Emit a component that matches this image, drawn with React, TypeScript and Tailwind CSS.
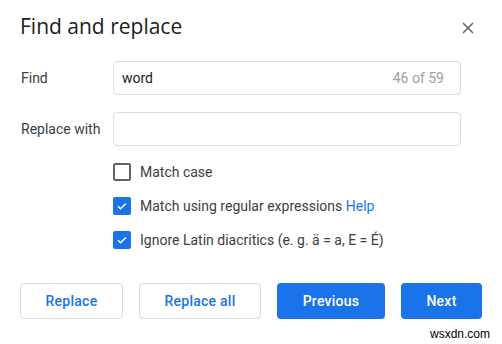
import React from 'react';

function CheckRow({ checked, children }: { checked: boolean; children: React.ReactNode }) {
  return (
    <div className="flex items-center h-[18px]">
      {checked ? (
        <span className="w-[18px] h-[18px] rounded-[2px] bg-[#1a73e8] flex items-center justify-center">
          <svg width="12" height="12" viewBox="0 0 24 24" fill="none">
            <path d="M4 12.5l5 5L20 7" stroke="white" strokeWidth="3" />
          </svg>
        </span>
      ) : (
        <span className="w-[18px] h-[18px] rounded-[2px] border-2 border-[#5f6368]" />
      )}
      <span className="ml-[9px] text-[14px] text-[#3c4043]">{children}</span>
    </div>
  );
}

export default function App() {
  const btn =
    "h-[36px] rounded-[4px] text-[14px] font-medium flex items-center justify-center tracking-[0.25px]";
  return (
    <div className="w-[502px] h-[344px] bg-white font-['Roboto',sans-serif] flex flex-col">
      <div className="flex items-start justify-between pl-[20px] pr-[28px] pt-[12px]">
        <h1 className="text-[21px] leading-[28px] text-[#202124] font-['Open_Sans',sans-serif]">
          Find and replace
        </h1>
        <svg className="mt-[10px]" width="12" height="12" viewBox="0 0 12 12">
          <path d="M1 1L11 11M11 1L1 11" stroke="#5f6368" strokeWidth="1.5" />
        </svg>
      </div>

      <div className="flex items-center pl-[21px] pr-[41px] mt-[21px]">
        <span className="w-[92px] text-[14px] text-[#3c4043]">Find</span>
        <div className="flex-1 h-[34px] border border-[#dadce0] rounded-[4px] flex items-center justify-between pl-[8px] pr-[16px]">
          <span className="text-[14px] text-[#202124]">word</span>
          <span className="text-[14px] text-[#9aa0a6]">46 of 59</span>
        </div>
      </div>

      <div className="flex items-center pl-[21px] pr-[41px] mt-[17px]">
        <span className="w-[92px] text-[14px] text-[#3c4043]">Replace with</span>
        <div className="flex-1 h-[34px] border border-[#dadce0] rounded-[4px]" />
      </div>

      <div className="flex flex-col gap-[16px] pl-[113px] mt-[17px]">
        <CheckRow checked={false}>Match case</CheckRow>
        <CheckRow checked={true}>
          Match using regular expressions <span className="text-[#1a73e8]">Help</span>
        </CheckRow>
        <CheckRow checked={true}>Ignore Latin diacritics (e. g. ä = a, E = É)</CheckRow>
      </div>

      <div className="flex gap-[16px] pl-[20px] mt-[34px]">
        <button className={`${btn} w-[103px] border border-[#dadce0] text-[#1a73e8] bg-white`}>
          Replace
        </button>
        <button className={`${btn} w-[122px] border border-[#dadce0] text-[#1a73e8] bg-white`}>
          Replace all
        </button>
        <button className={`${btn} w-[108px] bg-[#1a73e8] text-white`}>Previous</button>
        <button className={`${btn} w-[81px] bg-[#1a73e8] text-white`}>Next</button>
      </div>

      <div className="flex justify-end pr-[12px] mt-[7px]">
        <span className="text-[12px] leading-[16px] text-black font-['Liberation_Sans',sans-serif]">
          wsxdn.com
        </span>
      </div>
    </div>
  );
}
